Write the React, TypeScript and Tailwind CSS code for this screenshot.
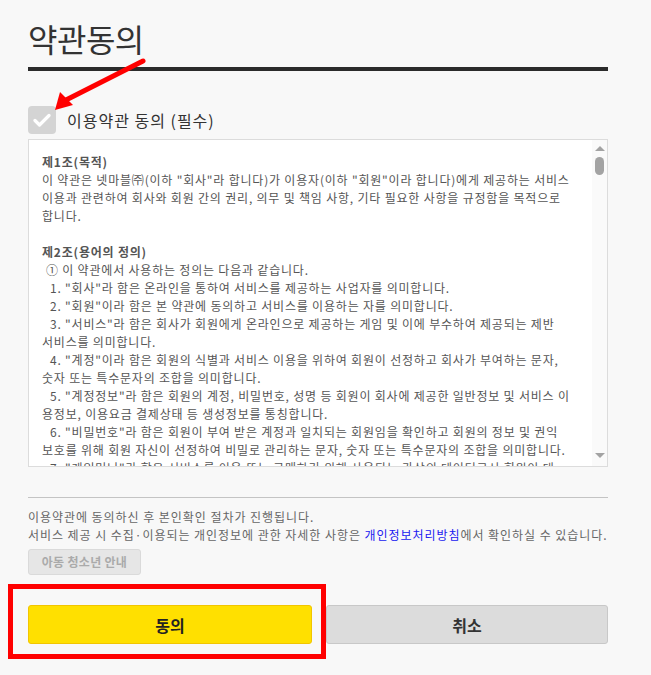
const terms = [
  { t: "제1조(목적)", bold: true },
  { t: "이 약관은 넷마블㈜(이하 \"회사\"라 합니다)가 이용자(이하 \"회원\"이라 합니다)에게 제공하는 서비스" },
  { t: "이용과 관련하여 회사와 회원 간의 권리, 의무 및 책임 사항, 기타 필요한 사항을 규정함을 목적으로" },
  { t: "합니다." },
  { t: "" },
  { t: "제2조(용어의 정의)", bold: true },
  { t: "① 이 약관에서 사용하는 정의는 다음과 같습니다.", pad: "pl-[4px]" },
  { t: "1. \"회사\"라 함은 온라인을 통하여 서비스를 제공하는 사업자를 의미합니다.", pad: "pl-[8px]" },
  { t: "2. \"회원\"이라 함은 본 약관에 동의하고 서비스를 이용하는 자를 의미합니다.", pad: "pl-[8px]" },
  { t: "3. \"서비스\"라 함은 회사가 회원에게 온라인으로 제공하는 게임 및 이에 부수하여 제공되는 제반", pad: "pl-[8px]" },
  { t: "서비스를 의미합니다." },
  { t: "4. \"계정\"이라 함은 회원의 식별과 서비스 이용을 위하여 회원이 선정하고 회사가 부여하는 문자,", pad: "pl-[8px]" },
  { t: "숫자 또는 특수문자의 조합을 의미합니다." },
  { t: "5. \"계정정보\"라 함은 회원의 계정, 비밀번호, 성명 등 회원이 회사에 제공한 일반정보 및 서비스 이", pad: "pl-[8px]" },
  { t: "용정보, 이용요금 결제상태 등 생성정보를 통칭합니다." },
  { t: "6. \"비밀번호\"라 함은 회원이 부여 받은 계정과 일치되는 회원임을 확인하고 회원의 정보 및 권익", pad: "pl-[8px]" },
  { t: "보호를 위해 회원 자신이 선정하여 비밀로 관리하는 문자, 숫자 또는 특수문자의 조합을 의미합니다." },
  { t: "7. \"게임머니\"라 함은 서비스를 이용 또는 구매하기 위해 사용되는 가상의 데이터로서 회원이 대", pad: "pl-[8px]" },
];

const App = () => {
  return (
    <div className="relative min-h-screen w-[651px] bg-[#f8f8f8] font-['Noto_Sans_CJK_KR',sans-serif] text-[#555]">
      <div className="ml-[28px] w-[580px] pt-[18px]">
        <h1 className="text-[32px] leading-[40px] tracking-[-0.5px] text-[#333] font-normal">약관동의</h1>
        <div className="mt-[9px] h-[4px] bg-[#2b2b2b]"></div>

        <div className="mt-[35px] flex items-center gap-[11px] h-[28px]">
          <div className="w-[28px] h-[28px] rounded-[4px] bg-[#d4d4d4] flex items-center justify-center">
            <svg width="18" height="14" viewBox="0 0 18 14">
              <path d="M2 7.5 L6.5 12 L16 2.5" fill="none" stroke="#fff" strokeWidth="3.2" strokeLinecap="round" strokeLinejoin="round" />
            </svg>
          </div>
          <span className="text-[16px] text-[#333] tracking-[1px]">이용약관 동의 (필수)</span>
        </div>

        <div className="mt-[5px] h-[328px] border border-[#dcdcdc] bg-white flex overflow-hidden">
          <div className="flex-1 overflow-hidden pl-[13px] pt-[13px] text-[12px] leading-[18px] tracking-[0.8px] text-[#555]">
            {terms.map((line, i) => (
              <div
                key={i}
                className={`whitespace-pre h-[18px] ${line.bold ? "font-bold" : ""} ${line.pad ?? ""}`}
              >
                {line.t}
              </div>
            ))}
          </div>
          <div className="w-[15px] bg-[#fafafa] flex flex-col items-center pt-[6px] pb-[8px]">
            <div className="w-0 h-0 border-l-[5px] border-r-[5px] border-b-[5px] border-l-transparent border-r-transparent border-b-[#a3a3a3]"></div>
            <div className="mt-[6px] w-[9px] h-[18px] rounded-full bg-[#a3a3a3]"></div>
            <div className="flex-1"></div>
            <div className="w-0 h-0 border-l-[5px] border-r-[5px] border-t-[5px] border-l-transparent border-r-transparent border-t-[#a3a3a3]"></div>
          </div>
        </div>

        <div className="mt-[30px] h-px bg-[#c4c4c4]"></div>
        <div className="pt-[10px] text-[12px] leading-[18px] tracking-[0.95px] text-[#666]">
          <p>이용약관에 동의하신 후 본인확인 절차가 진행됩니다.</p>
          <p className="whitespace-nowrap">
            서비스 제공 시 수집·이용되는 개인정보에 관한 자세한 사항은{" "}
            <span className="text-[#2020f0]">개인정보처리방침</span>에서 확인하실 수 있습니다.
          </p>
        </div>
        <button className="mt-[5px] h-[26px] w-[113px] rounded-[3px] border border-[#dadada] bg-[#e6e6e6] text-[12px] font-bold text-[#aaa] tracking-[0.3px]">
          아동 청소년 안내
        </button>

        <div className="mt-[30px] flex gap-[14px]">
          <button className="h-[39px] w-[284px] rounded-[3px] border border-[#f2c500] bg-[#ffe000] text-[16px] font-bold text-[#222]">
            동의
          </button>
          <button className="h-[39px] flex-1 rounded-[3px] border border-[#c8c8c8] bg-[#dcdcdc] text-[16px] font-bold text-[#333]">
            취소
          </button>
        </div>
      </div>

      <div className="absolute left-[8px] top-[584px] w-[318px] h-[75px] border-[5px] border-[#ff0000] pointer-events-none"></div>
      <svg className="absolute left-0 top-0 pointer-events-none" width="651" height="675">
        <line x1="143" y1="61" x2="64" y2="101" stroke="#ff0000" strokeWidth="5" strokeLinecap="round" />
        <polygon points="55,110 60,92 73,105" fill="#ff0000" />
      </svg>
    </div>
  );
};

export default App;
